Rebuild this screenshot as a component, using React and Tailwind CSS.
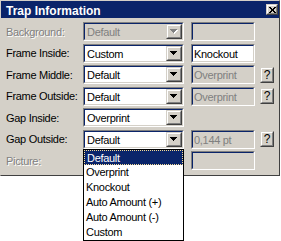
import React from "react";

const FACE = "bg-[#d4d0c8]";

function Arrow({ disabled }) {
    // small 7x4 pixel triangle, grey + white emboss when disabled
    return (
        <svg width="8" height="5" viewBox="0 0 8 5" shapeRendering="crispEdges">
            {disabled && (
                <g fill="#ffffff">
                    <rect x="1" y="1" width="7" height="1" />
                    <rect x="2" y="2" width="5" height="1" />
                    <rect x="3" y="3" width="3" height="1" />
                    <rect x="4" y="4" width="1" height="1" />
                </g>
            )}
            <g fill={disabled ? "#808080" : "#000000"}>
                <rect x="0" y="0" width="7" height="1" />
                <rect x="1" y="1" width="5" height="1" />
                <rect x="2" y="2" width="3" height="1" />
                <rect x="3" y="3" width="1" height="1" />
            </g>
        </svg>
    );
}

function Raised({ className = "", children }) {
    return (
        <div className={`border border-t-[#d4d0c8] border-l-[#d4d0c8] border-b-[#404040] border-r-[#404040] bg-[#d4d0c8] ${className}`}>
            <div className="flex h-full items-center justify-center border border-t-white border-l-white border-b-[#808080] border-r-[#808080]">
                {children}
            </div>
        </div>
    );
}

function Sunken({ className = "", inner = "", children }) {
    return (
        <div className={`relative h-[19px] border border-t-[#808080] border-l-[#808080] border-b-white border-r-white ${className}`}>
            <div className={`flex h-full border border-t-[#0a246a] border-l-[#0a246a] border-b-[#d4d0c8] border-r-[#d4d0c8] ${inner}`}>
                {children}
            </div>
        </div>
    );
}

function Combo({ value, disabled, children }) {
    return (
        <div className="relative w-[101px]">
            <Sunken inner={disabled ? "bg-[#d4d0c8]" : "bg-white"}>
                <span className={`flex-1 truncate pl-[2px] pt-[1px] leading-[15px] ${disabled ? "text-[#808080]" : "text-black"}`}>
                    {value}
                </span>
                <Raised className="h-[15px] w-[16px]">
                    <Arrow disabled={disabled} />
                </Raised>
            </Sunken>
            {children}
        </div>
    );
}

function Field({ value, disabled }) {
    return (
        <Sunken className="w-[64px]" inner={disabled ? "bg-[#d4d0c8]" : "bg-white"}>
            <span className={`pl-[1px] pt-[1px] leading-[15px] ${disabled ? "text-[#808080]" : "text-black"}`}>{value}</span>
        </Sunken>
    );
}

function Help() {
    return (
        <Raised className="h-[16px] w-[14px]">
            <span className="text-[12px] leading-[12px] text-black">?</span>
        </Raised>
    );
}

const OPTIONS = ["Default", "Overprint", "Knockout", "Auto Amount (+)", "Auto Amount (-)", "Custom"];

function DropList() {
    return (
        <div className="absolute left-0 top-full z-10 w-[101px] border border-black bg-white">
            {OPTIONS.map((o, i) => (
                <div
                    key={o}
                    className={`h-[15px] pl-[2px] leading-[15px] ${i === 0 ? "border border-dotted border-[#f5db95] bg-[#0a246a] pl-[1px] leading-[13px] text-white" : "text-black"}`}
                >
                    {o}
                </div>
            ))}
        </div>
    );
}

const ROWS = [
    { label: "Background:", combo: "Default", comboOff: true, field: "", fieldOff: true },
    { label: "Frame Inside:", combo: "Custom", field: "Knockout" },
    { label: "Frame Middle:", combo: "Default", field: "Overprint", fieldOff: true, help: true },
    { label: "Frame Outside:", combo: "Default", field: "Overprint", fieldOff: true, help: true },
    { label: "Gap Inside:", combo: "Overprint" },
    { label: "Gap Outside:", combo: "Default", field: "0,144 pt", fieldOff: true, help: true, open: true },
    { label: "Picture:", combo: "", comboOff: true, field: "", fieldOff: true, labelOff: true },
];

export default function App() {
    return (
        <div className="relative h-[241px] w-[281px] overflow-hidden bg-white text-[11px] tracking-[-0.3px] text-black [font-family:'Liberation_Sans',Arial,sans-serif]">
            <div className={`w-[280px] border border-t-[#d4d0c8] border-l-[#d4d0c8] border-b-[#404040] border-r-[#404040] ${FACE}`}>
                {/* title bar */}
                <div className="flex h-[17px] items-start justify-between bg-[#0a246a]">
                    <span className="pl-[5px] pt-[4px] text-[12px] font-bold leading-[13px] tracking-normal text-white">
                        Trap Information
                    </span>
                    <Raised className="mr-[1px] mt-[3px] h-[11px] w-[12px]">
                        <svg width="7" height="6" viewBox="0 0 7 6" shapeRendering="crispEdges">
                            <path d="M0 0h2v1h-2zM5 0h2v1h-2zM1 1h2v1h-2zM4 1h2v1h-2zM2 2h3v2h-3zM1 4h2v1h-2zM4 4h2v1h-2zM0 5h2v1h-2zM5 5h2v1h-2z" fill="#000" />
                        </svg>
                    </Raised>
                </div>

                {/* rows */}
                <div className="flex flex-col gap-[2.5px] pb-[5px] pl-[5px] pt-[4px]">
                    {ROWS.map((r) => (
                        <div key={r.label} className="flex h-[19px] items-center">
                            <span
                                className={`w-[77px] pt-[1px] ${r.labelOff || r.comboOff ? "text-[#808080] [text-shadow:1px_1px_0_#ffffff]" : ""}`}
                            >
                                {r.label}
                            </span>
                            <Combo value={r.combo} disabled={r.comboOff}>
                                {r.open && <DropList />}
                            </Combo>
                            {r.field !== undefined && (
                                <div className="ml-[7px]">
                                    <Field value={r.field} disabled={r.fieldOff} />
                                </div>
                            )}
                            {r.help && (
                                <div className="ml-[5px]">
                                    <Help />
                                </div>
                            )}
                        </div>
                    ))}
                </div>
            </div>
        </div>
    );
}
